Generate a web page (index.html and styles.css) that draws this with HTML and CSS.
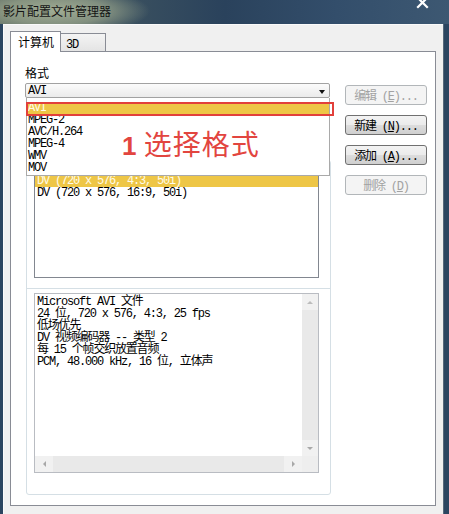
FILE: index.html
```html
<!DOCTYPE html>
<html lang="zh-CN">
<head>
  <meta charset="UTF-8" />
  <meta name="viewport" content="width=device-width, initial-scale=1.0"/>
  <title>影片配置文件管理器</title>
  <link rel="stylesheet" href="styles.css">
</head>
<body>
  <div class="titlebar">
    <span class="title">影片配置文件管理器</span>
    <svg class="close" width="13" height="13" viewBox="0 0 13 13">
      <path d="M2 2 L11 11 M11 2 L2 11" stroke="#fff" stroke-width="2.2" stroke-linecap="square"/>
    </svg>
  </div>

  <div class="client">
    <div class="tabs">
      <div class="tab active">计算机</div>
      <div class="tab">3D</div>
    </div>

    <div class="panel">
      <div class="main">
        <div class="label">格式</div>
        <div class="combo">
          <span>AVI</span>
          <span class="arrow"></span>
        </div>

        <div class="frame">
          <div class="listbox">
            <div class="row selected">DV (720 x 576, 4:3, 50i)</div>
            <div class="row">DV (720 x 576, 16:9, 50i)</div>
          </div>
          <div class="divider"></div>
          <div class="infobox">
            <div class="info-text">
              <div>Microsoft AVI 文件</div>
              <div>24 位, 720 x 576, 4:3, 25 fps</div>
              <div>低场优先</div>
              <div>DV 视频编码器 -- 类型 2</div>
              <div>每 15 个帧交织放置音频</div>
              <div>PCM, 48.000 kHz, 16 位, 立体声</div>
            </div>
            <div class="vscroll">
              <span class="sbtn"><span class="tri up"></span></span>
              <span class="track"></span>
              <span class="sbtn"><span class="tri down"></span></span>
            </div>
            <div class="hscroll">
              <span class="sbtn"><span class="tri left"></span></span>
              <span class="track"></span>
              <span class="sbtn"><span class="tri right"></span></span>
            </div>
            <div class="corner"></div>
          </div>
        </div>
      </div>

      <div class="buttons">
        <button class="btn" disabled>编辑 (<u>E</u>)...</button>
        <button class="btn">新建 (<u>N</u>)...</button>
        <button class="btn">添加 (<u>A</u>)...</button>
        <button class="btn" disabled>删除 (<u>D</u>)</button>
      </div>

      <!-- open dropdown of the format combo -->
      <div class="dropdown">
        <div class="row selected">AVI</div>
        <div class="row">MPEG-2</div>
        <div class="row">AVC/H.264</div>
        <div class="row">MPEG-4</div>
        <div class="row">WMV</div>
        <div class="row">MOV</div>
      </div>
      <div class="mark"></div>
      <div class="note"><b>1</b> 选择格式</div>
    </div>
  </div>
</body>
</html>
```

FILE: styles.css
```css
* {
  box-sizing: border-box;
}

body {
  margin: 0;
  width: 449px;
  height: 514px;
  overflow: hidden;
  background: #2b4560;
  font-family: "Liberation Mono", "Noto Sans CJK SC", monospace;
  font-size: 12px;
  color: #000;
}

.titlebar {
  height: 24px;
  display: flex;
  align-items: flex-start;
  padding-left: 3px;
  background:
    radial-gradient(ellipse 95px 24px at 55px 11px, rgba(160, 172, 148, 1) 0%, rgba(150, 162, 138, 0.75) 55%, rgba(150, 162, 138, 0) 100%),
    linear-gradient(90deg, #5d6b62 0%, #3a505f 28%, #2a425c 50%, #334e6b 75%, #3d5872 100%);
}

.title {
  font-family: "Noto Sans CJK SC", sans-serif;
  font-size: 12px;
  line-height: 12px;
  margin-top: 5px;
  color: #141414;
}

.close {
  margin-left: auto;
  margin-right: 20px;
  margin-top: -4px;
}

.client {
  margin-left: 3px;
  width: 441px;
  height: 490px;
  background: #f0f0f0;
  padding: 7px 0 0 7px;
  box-shadow: inset -1px 0 #56687a, inset 1px 1px #fafafa;
}

/* tabs */
.tabs {
  display: flex;
  align-items: flex-end;
  height: 21px;
  margin-bottom: -1px;
  position: relative;
  z-index: 1;
}

.tab {
  border: 1px solid #898c95;
  border-bottom: none;
  line-height: 12px;
}

.tab.active {
  position: relative;
  z-index: 2;
  width: 51px;
  height: 21px;
  background: #fff;
  padding: 4px 0 0 7px;
  font-family: "Noto Sans CJK SC", sans-serif;
}

.tab:not(.active) {
  width: 46px;
  height: 18px;
  margin-left: -1px;
  margin-bottom: 1px;
  padding: 5px 0 0 5px;
  letter-spacing: -1.2px;
  background: linear-gradient(#f4f4f4, #e4e4e4);
}

.panel {
  position: relative;
  width: 426px;
  height: 455px;
  background: #fff;
  border: 1px solid #898c95;
  display: flex;
  align-items: flex-start;
  padding: 14px 0 0 14px;
}

.main {
  width: 305px;
}

.label {
  font-family: "Noto Sans CJK SC", sans-serif;
  line-height: 14px;
  height: 14px;
}

.combo {
  margin-top: 3px;
  height: 15px;
  border: 1px solid #a2a2a2;
  border-radius: 2px;
  background: linear-gradient(#fbfbfb, #ebebeb);
  display: flex;
  align-items: center;
  justify-content: space-between;
  padding: 0 4px 0 2px;
  line-height: 12px;
  letter-spacing: -1.2px;
}

.arrow {
  width: 0;
  height: 0;
  margin-top: 2px;
  border-left: 3.5px solid transparent;
  border-right: 3.5px solid transparent;
  border-top: 4px solid #111;
}

.frame {
  margin: 62px 0 0 1px;
  width: 305px;
  border: 1px solid #d5dfe5;
  border-radius: 3px;
  padding: 13px 11px 21px 7px;
}

.listbox {
  height: 104px;
  border: 1px solid #828790;
}

.row {
  height: 12px;
  line-height: 12px;
  padding-left: 2px;
  letter-spacing: -1.2px;
  white-space: nowrap;
  overflow: hidden;
}

.row.selected {
  background: #eec646;
  color: #fffbe8;
}

.divider {
  height: 1px;
  margin: 10px -11px 0 -7px;
  background: #d5dfe5;
}

.infobox {
  margin-top: 4px;
  height: 180px;
  border: 1px solid #b9bcc2;
  display: grid;
  grid-template-columns: 1fr 16px;
  grid-template-rows: 1fr 16px;
}

.info-text {
  padding: 2px 0 0 2px;
  line-height: 12px;
  letter-spacing: -1.2px;
  white-space: nowrap;
  overflow: hidden;
}

.info-text div {
  height: 12px;
}

.vscroll,
.hscroll {
  display: flex;
  background: #e9e9e9;
}

.vscroll {
  flex-direction: column;
}

.track {
  flex: 1;
}

.sbtn {
  width: 16px;
  height: 16px;
  display: flex;
  align-items: center;
  justify-content: center;
  background: #f1f1f1;
}

.hscroll .sbtn {
  width: 18px;
}

.corner {
  background: #eeeeee;
}

.tri {
  width: 0;
  height: 0;
  border: 3px solid transparent;
}

.tri.up { border-bottom-color: #bcbcbc; margin-top: -3px; }
.tri.down { border-top-color: #a8a8a8; margin-top: 3px; }
.tri.left { border-right-color: #a8a8a8; margin-left: -3px; }
.tri.right { border-left-color: #a8a8a8; margin-left: 3px; }

/* buttons on the right */
.buttons {
  margin: 19px 0 0 15px;
  width: 82px;
  display: flex;
  flex-direction: column;
  gap: 10px;
}

.btn {
  height: 20px;
  padding: 0;
  border: 1px solid #707070;
  border-radius: 3px;
  background: linear-gradient(#f3f3f3 0%, #ebebeb 48%, #dcdcdc 52%, #cfcfcf 100%);
  font-family: inherit;
  font-size: 12px;
  letter-spacing: -1.2px;
  color: #000;
}

.btn:disabled {
  border-color: #b2b6b9;
  background: #f4f4f4;
  color: #a2a2a2;
}

/* open combo list and the red annotation */
.dropdown {
  position: absolute;
  left: 15px;
  top: 46px;
  width: 304px;
  height: 78px;
  padding-top: 4px;
  background: #fff;
  border: 1px solid #a9a9a9;
  border-top: none;
  z-index: 3;
}

.dropdown .row {
  padding-left: 1px;
}

.mark {
  position: absolute;
  left: 15px;
  top: 50px;
  width: 308px;
  height: 14px;
  border: 2px solid #e2403b;
  z-index: 4;
}

.note {
  position: absolute;
  left: 111px;
  top: 76px;
  z-index: 4;
  font-family: "Noto Sans CJK SC", sans-serif;
  font-size: 28px;
  line-height: 30px;
  letter-spacing: 1px;
  color: #e2453f;
}

.note b {
  font-family: "Liberation Sans", sans-serif;
  font-size: 26px;
  letter-spacing: 0;
}
```
